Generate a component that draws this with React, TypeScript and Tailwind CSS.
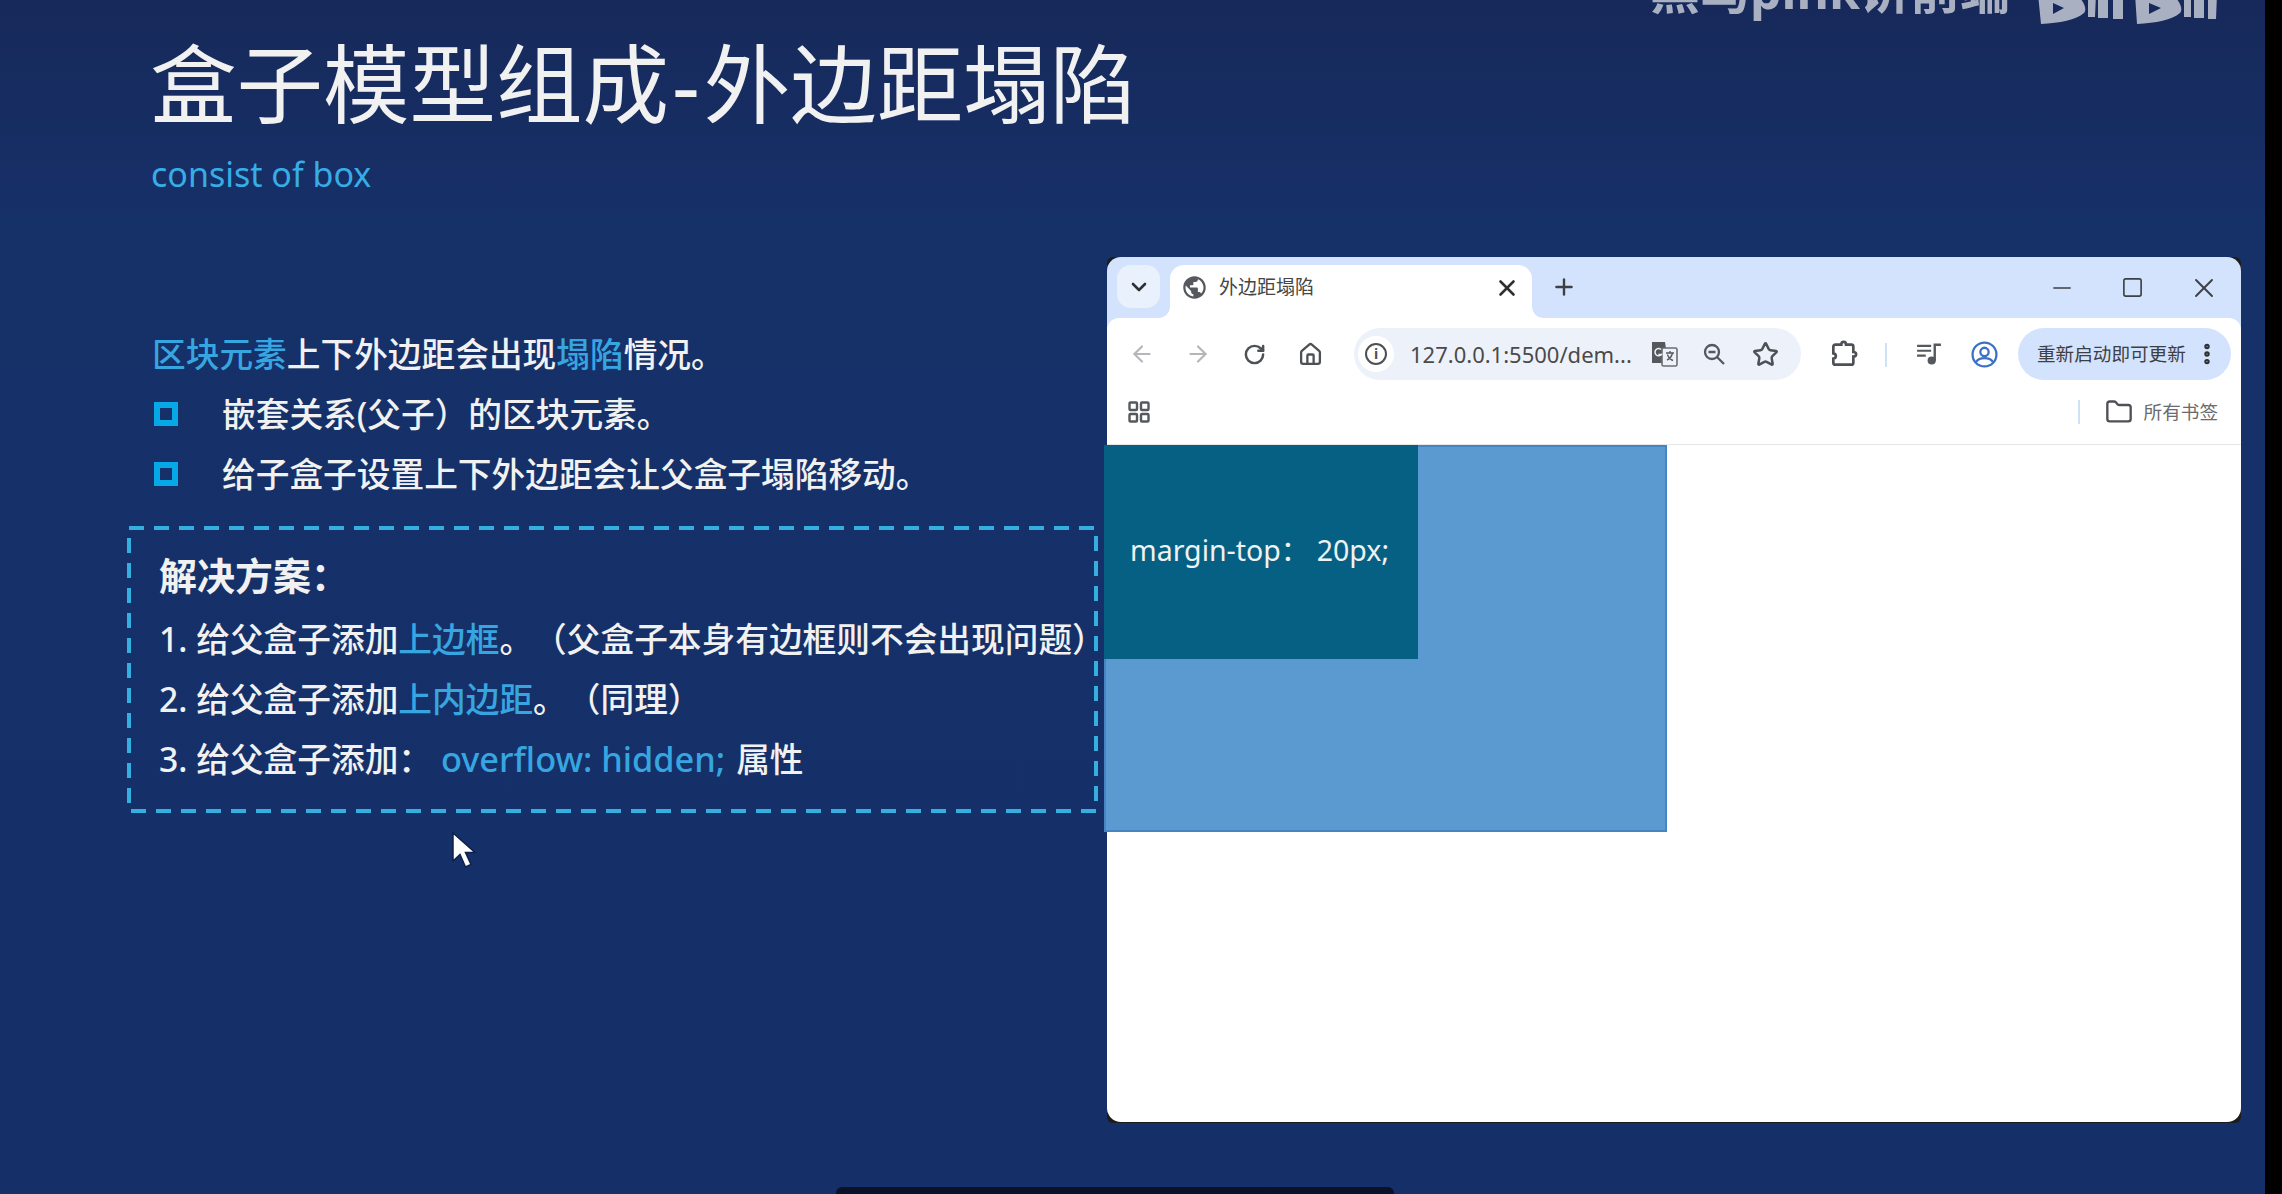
import {
  ArrowLeft,
  ArrowRight,
  ChevronDown,
  EllipsisVertical,
  Folder,
  House,
  Minus,
  Plus,
  RotateCw,
  Square,
  Star,
  X,
} from "lucide-react";

function Globe() {
  return (
    <svg viewBox="0 0 24 24" className="w-[27px] h-[27px] fill-[#55585c]">
      <path d="M12 2C6.48 2 2 6.48 2 12s4.48 10 10 10 10-4.48 10-10S17.52 2 12 2zm-1 17.93c-3.95-.49-7-3.85-7-7.93 0-.62.08-1.21.21-1.79L9 15v1c0 1.1.9 2 2 2v1.93zm6.9-2.54c-.26-.81-1-1.39-1.9-1.39h-1v-3c0-.55-.45-1-1-1H8v-2h2c.55 0 1-.45 1-1V7h2c1.1 0 2-.9 2-2v-.41c2.93 1.19 5 4.06 5 7.41 0 2.08-.8 3.97-2.1 5.39z" />
    </svg>
  );
}

function TranslateIcon() {
  return (
    <svg viewBox="0 0 28 28" className="w-[28px] h-[28px]">
      <path d="M1 2h13l3 21H1z" fill="#55585c" />
      <rect x="11" y="8" width="15" height="18" rx="1.5" fill="#eef2f9" stroke="#6b6f74" strokeWidth="1.6" />
      <path d="M10 9.500a3.600 3.600 0 1 0 .4 5h-3" fill="none" stroke="#eef2f9" strokeWidth="1.5" />
      <path d="M15 13h8M19 11v2M21.500 13c-1 4-3 6-5.500 7M16.500 14.500c1 3 3 5 5.500 6" fill="none" stroke="#55585c" strokeWidth="1.4" />
    </svg>
  );
}

function ZoomOutIcon() {
  return (
    <svg viewBox="0 0 24 24" className="w-[24px] h-[24px] fill-none stroke-[#55585c] stroke-[2.3]">
      <circle cx="10" cy="10" r="7" />
      <path d="M6.500 10h7M15 15l7 7" />
    </svg>
  );
}

function ExtensionIcon() {
  return (
    <svg viewBox="0 0 24 24" className="w-[32px] h-[32px] fill-none stroke-[#4d5054] stroke-[2]">
      <path d="M5.500 5H10c0-2.800 3.500-2.800 3.500 0h4a1.500 1.500 0 0 1 1.500 1.500V10.500c2.800 0 2.800 3.500 0 3.500v4.500a1.500 1.500 0 0 1-1.500 1.500H5.500A1.500 1.500 0 0 1 4 18.500V15.500c2.500-.4 2.500-3.600 0-4V6.500A1.500 1.500 0 0 1 5.500 5z" />
    </svg>
  );
}

function MediaIcon() {
  return (
    <svg viewBox="0 0 24 24" className="w-[26px] h-[26px]">
      <path d="M1 4.500h13M1 9h13M1 13.500h8" fill="none" stroke="#55585c" strokeWidth="2" />
      <circle cx="14.500" cy="18" r="3.800" fill="#55585c" />
      <path d="M17.300 18V3.500H23" fill="none" stroke="#55585c" strokeWidth="2.200" />
    </svg>
  );
}

function ProfileIcon() {
  return (
    <svg viewBox="0 0 26 26" className="w-[27px] h-[27px] fill-none stroke-[#3b71c4] stroke-[2.200]">
      <circle cx="13" cy="13" r="11.500" />
      <circle cx="13" cy="10.500" r="4" />
      <path d="M5 20c2-3 5-3.500 8-3.500s6 .5 8 3.500" />
    </svg>
  );
}

function AppsIcon() {
  return (
    <svg viewBox="0 0 22 22" className="w-[22px] h-[22px] fill-none stroke-[#55585c] stroke-[2.400]">
      <rect x="1.500" y="1.500" width="7.500" height="7.500" rx="1" />
      <rect x="13" y="1.500" width="7.500" height="7.500" rx="1" />
      <rect x="1.500" y="13" width="7.500" height="7.500" rx="1" />
      <rect x="13" y="13" width="7.500" height="7.500" rx="1" />
    </svg>
  );
}

function BiliLogo() {
  return (
    <svg viewBox="0 0 182 30" className="w-[182px] h-[30px] fill-[#a9b0c2]">
      <path d="M0 -6H38C47 2 49 10 46 13 38 20 22 23 3 24ZM15 3V14L26 8Z" fillRule="evenodd" />
      <path d="M50 -6H58L57 17H50ZM60 -6H70L70 18H60ZM75 -6H85V19H75Z" />
      <path d="M97 -6H134C143 2 145 10 142 13 134 20 118 23 99 24ZM111 3V14L123 8Z" fillRule="evenodd" />
      <path d="M146 -6H153L153 17H146ZM156 -6H166V18H156ZM170 -6H179L178 19H170Z" />
    </svg>
  );
}

function Cursor() {
  return (
    <svg viewBox="0 0 26 37" className="w-[26px] h-[37px]">
      <path d="M2 1V29L9 22.500L14.500 35L20 32.500L14.500 20.500H24Z" fill="#fff" stroke="#10204a" strokeWidth="1.500" />
    </svg>
  );
}

function Bullet({ text }: { text: string }) {
  return (
    <div className="h-[60px] flex items-center pl-[27px]">
      <span className="w-[24px] h-[24px] border-[6px] border-[#07a8e6] mr-[44px]" />
      <span>{text}</span>
    </div>
  );
}

function Browser() {
  return (
    <div className="w-[1134px] h-[866px] bg-[#1c1c1c] pb-px rounded-[6px] font-['Noto_Sans','Noto_Sans_CJK_SC',sans-serif] text-[#444746]">
      <div className="rounded-t-[14px] bg-[#d3e3fd]">
        <div className="h-[61px] flex pl-[10px]">
          <div className="w-[43px] h-[43px] mt-[8px] rounded-[14px] bg-[#e9f1fd] flex items-center justify-center">
            <ChevronDown className="w-[24px] h-[24px] text-[#2f3033]" strokeWidth={2.6} />
          </div>
          <div className="relative w-[362px] h-[53px] mt-[8px] ml-[10px] pb-[8px] bg-white rounded-t-[14px] flex items-center pl-[11px]">
            <span className="absolute -left-[11px] bottom-0 w-[11px] h-[11px] bg-[radial-gradient(circle_at_0_0,transparent_10.500px,white_11px)]" />
            <span className="absolute -right-[11px] bottom-0 w-[11px] h-[11px] bg-[radial-gradient(circle_at_100%_0,transparent_10.500px,white_11px)]" />
            <Globe />
            <span className="ml-[11px] text-[19px] leading-none">外边距塌陷</span>
            <X className="ml-auto mr-[12px] w-[26px] h-[26px] text-[#2f3033]" strokeWidth={2.4} />
          </div>
          <Plus className="ml-[19px] mt-[17px] w-[26px] h-[26px] text-[#3d4043]" strokeWidth={2.2} />
          <div className="ml-auto flex h-[61px] pr-[2px]">
            <div className="w-[71px] flex items-center justify-center">
              <Minus className="w-[28px] h-[28px] text-[#3d4043]" strokeWidth={1.4} />
            </div>
            <div className="w-[71px] flex items-center justify-center">
              <Square className="w-[23px] h-[23px] text-[#3d4043]" strokeWidth={1.7} />
            </div>
            <div className="w-[71px] flex items-center justify-center">
              <X className="w-[32px] h-[32px] text-[#3d4043]" strokeWidth={1.4} />
            </div>
          </div>
        </div>
        <div className="bg-white rounded-t-[12px] h-[72px] pt-[10px] flex items-start pl-[7px]">
          <div className="w-[56px] h-[52px] flex items-center justify-center">
            <ArrowLeft className="w-[26px] h-[26px] text-[#b4b6b9]" strokeWidth={2} />
          </div>
          <div className="w-[56px] h-[52px] flex items-center justify-center">
            <ArrowRight className="w-[26px] h-[26px] text-[#b4b6b9]" strokeWidth={2} />
          </div>
          <div className="w-[56px] h-[52px] flex items-center justify-center">
            <RotateCw className="w-[23px] h-[23px] text-[#4d5054]" strokeWidth={2.6} />
          </div>
          <div className="w-[56px] h-[52px] flex items-center justify-center">
            <House className="w-[25px] h-[25px] text-[#4d5054]" strokeWidth={2.2} />
          </div>
          <div className="ml-[16px] w-[447px] h-[52px] rounded-full bg-[#edf2fa] flex items-center pl-[4px]">
            <div className="w-[36px] h-[36px] rounded-full bg-white flex items-center justify-center">
              <div className="w-[22px] h-[22px] rounded-full border-2 border-[#4d5054] flex items-center justify-center text-[14px] font-bold leading-none text-[#4d5054]">i</div>
            </div>
            <span className="ml-[16px] w-[222px] text-[22px] leading-none text-[#4a4a4a] whitespace-nowrap">127.0.0.1:5500/dem...</span>
            <div className="ml-[19px] w-[28px] flex justify-center"><TranslateIcon /></div>
            <div className="ml-[21px] w-[28px] flex justify-center"><ZoomOutIcon /></div>
            <div className="ml-[23px] w-[28px] flex justify-center">
              <Star className="w-[27px] h-[27px] text-[#4d5054]" strokeWidth={2.2} />
            </div>
          </div>
          <div className="ml-[23px] w-[40px] h-[52px] flex items-center justify-center"><ExtensionIcon /></div>
          <div className="ml-[21px] mt-[15px] w-[2px] h-[24px] bg-[#cfe0f8]" />
          <div className="ml-[22px] w-[40px] h-[52px] flex items-center justify-center"><MediaIcon /></div>
          <div className="ml-[15px] w-[40px] h-[52px] flex items-center justify-center"><ProfileIcon /></div>
          <div className="ml-[14px] w-[213px] h-[52px] rounded-full bg-[#d3e3fd] flex items-center pl-[19px] text-[18.600px] text-[#3c4043] whitespace-nowrap">
            重新启动即可更新
            <EllipsisVertical className="ml-[8px] w-[26px] h-[26px] text-[#2f3033]" strokeWidth={3} />
          </div>
        </div>
      </div>
      <div className="bg-white h-[55px] border-b border-[#e6e6e6] flex items-center pl-[21px] pr-[23px] pb-[10px]">
        <AppsIcon />
        <div className="ml-auto w-[2px] h-[24px] bg-[#cfe0f8]" />
        <Folder className="ml-[25px] w-[28px] h-[28px] text-[#4d5054]" strokeWidth={2} />
        <span className="ml-[11px] text-[18.600px] text-[#6b6b6b]">所有书签</span>
      </div>
      <div className="bg-white h-[677px] rounded-b-[14px]">
        <div className="-ml-[3px] w-[563px] h-[387px] bg-[#5b9ad1] border-2 border-[#4485c2]">
          <div className="-ml-[2px] -mt-[2px] w-[314px] h-[214px] pb-[3px] bg-[#066084] flex items-center pl-[26px] text-[28.500px] text-[#f1f1f1] whitespace-nowrap">
            margin-top： 20px;
          </div>
        </div>
      </div>
    </div>
  );
}

export default function App() {
  return (
    <div lang="zh-CN" className="relative w-[2282px] h-[1194px] overflow-hidden bg-black font-['Noto_Sans','Noto_Sans_CJK_SC',sans-serif] [text-spacing-trim:space-all]">
      <div className="relative w-[2265px] h-[1194px] pl-[127px] bg-[linear-gradient(180deg,#17295a_0%,#163068_18%,#153068_100%)] text-[#f1f1f1]">
        {/* Header */}
        <div className="h-[257px] pl-[23px]">
          <div className="pt-[34px] h-[134px] text-[86.500px] leading-[100px] whitespace-nowrap">
            盒子模型组成<span className="ml-[3px] mr-[4px]">-</span>外边距塌陷
          </div>
          <div className="mt-[18px] pl-[1px] text-[34px] leading-[44px] text-[#37ade6]">consist of box</div>
        </div>

        <div className="flex">
          {/* Left column */}
          <div className="w-[980px] pt-[67px] text-[33.700px] font-medium">
            <div className="h-[60px] flex items-center pl-[25px]">
              <span className="text-[#37a6e0]">区块元素</span>上下外边距会出现<span className="text-[#37a6e0]">塌陷</span>情况。
            </div>
            <Bullet text="嵌套关系(父子）的区块元素。" />
            <Bullet text="给子盒子设置上下外边距会让父盒子塌陷移动。" />

            <div className="relative mt-[22px] w-[971px] h-[287px] pl-[32px] pt-[19px] whitespace-nowrap">
              <svg className="absolute inset-0 w-full h-full fill-none stroke-[#35aee0] stroke-[4]" strokeDasharray="15 10">
                <rect x="2" y="2" width="967" height="283" />
              </svg>
              <div className="h-[60px] flex items-center font-bold text-[38px]">解决方案：</div>
              <div className="mt-[4px] h-[60px] flex items-center">
                1. 给父盒子添加<span className="text-[#37a6e0]">上边框</span>。（父盒子本身有边框则不会出现问题）
              </div>
              <div className="h-[60px] flex items-center">
                2. 给父盒子添加<span className="text-[#37a6e0]">上内边距</span>。（同理）
              </div>
              <div className="h-[60px] flex items-center">
                3. 给父盒子添加：
                <span className="ml-[9px] text-[34.300px] text-[#37a6e0]">overflow: hidden;</span>
                <span className="ml-[11px]">属性</span>
              </div>
            </div>
          </div>

          {/* Browser window */}
          <Browser />
        </div>

        {/* Video watermark, cut off by the top edge */}
        <div className="absolute left-[1650px] -top-[45px] text-[50px] font-bold leading-[70px] text-[#a9b0c2] whitespace-nowrap">黑马pink讲前端</div>
        <div className="absolute left-[2038px] top-0"><BiliLogo /></div>

        {/* Mouse pointer */}
        <div className="absolute left-[451px] top-[832px]"><Cursor /></div>

        {/* Player bar peeking in at the bottom */}
        <div className="absolute left-[836px] bottom-0 w-[558px] h-[7px] rounded-t-[6px] bg-[#0a1128]" />
      </div>
    </div>
  );
}
